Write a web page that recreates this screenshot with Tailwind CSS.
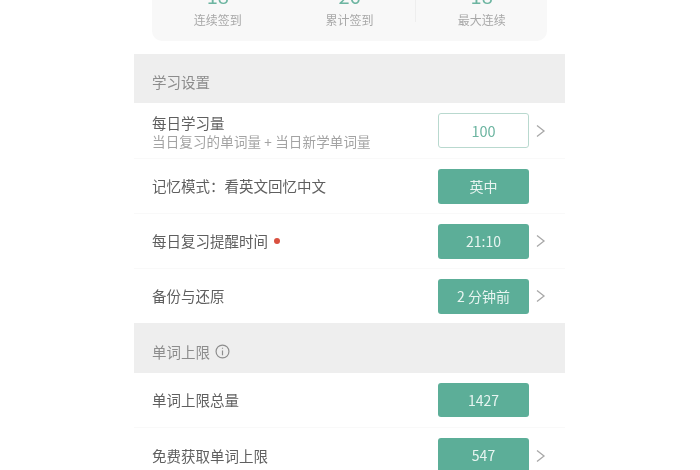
<!DOCTYPE html>
<html lang="zh-CN">

<head>
    <meta charset="UTF-8">
    <meta name="viewport" content="width=device-width, initial-scale=1.0">
    <title>学习设置</title>
    <script src="https://cdn.jsdelivr.net/npm/@tailwindcss/browser@4"></script>
</head>

<body class="bg-white h-[470px] overflow-hidden font-['Noto_Sans_CJK_SC','Noto_Sans',sans-serif]">
    <div class="w-[431px] ml-[134px] blur-[0.5px]">

        <!-- stats card, cut off by the top of the window -->
        <div class="mx-[18px] h-[91px] -mt-[50px] mb-[13px] bg-[#f8f8f8] rounded-[10px] grid grid-cols-3 pt-[32px]">
            <div class="flex flex-col items-center">
                <span class="text-[20px] leading-[28px] text-[#6db5a1]">18</span>
                <span class="text-[12px] leading-[18px] mt-[1px] text-[#a8a8a8]">连续签到</span>
            </div>
            <div class="flex flex-col items-center">
                <span class="text-[20px] leading-[28px] text-[#6db5a1]">26</span>
                <span class="text-[12px] leading-[18px] mt-[1px] text-[#a8a8a8]">累计签到</span>
            </div>
            <div class="flex flex-col items-center border-l border-[#eeeeee] h-[40px]">
                <span class="text-[20px] leading-[28px] text-[#6db5a1]">18</span>
                <span class="text-[12px] leading-[18px] mt-[1px] text-[#a8a8a8]">最大连续</span>
            </div>
        </div>

        <div class="h-[49px] bg-[#eeeeee] flex items-center px-[18px] pt-[7px] text-[14.5px] text-[#8c8c8c]">学习设置</div>

        <div class="h-[56px] flex items-center pl-[18px] pr-[18px] border-b border-[#f9f9f9]">
            <div class="flex-1 pt-[2px]">
                <div class="text-[14.5px] leading-[19px] text-[#5f5f5f]">每日学习量</div>
                <div class="text-[13.5px] leading-[18px] tracking-[0.15px] text-[#a3a3a3]">当日复习的单词量 + 当日新学单词量</div>
            </div>
            <div class="w-[91px] h-[35px] border border-[#b9d9cf] rounded-[3px] flex items-center justify-center text-[14.5px] text-[#6db5a1]">100</div>
            <svg class="w-[18px] h-[18px]" viewBox="0 0 18 18" fill="none" stroke="#a8a8a8" stroke-width="1.3"><path d="M8 3.5l7 5.5-7 5.5" /></svg>
        </div>

        <div class="h-[55px] flex items-center pl-[18px] pr-[18px] border-b border-[#f9f9f9]">
            <div class="flex-1 text-[14.5px] text-[#5f5f5f]">记忆模式：看英文回忆中文</div>
            <div class="w-[91px] h-[35px] bg-[#5cae98] rounded-[3px] flex items-center justify-center text-[14px] text-[#e8f5f1]">英中</div>
            <div class="w-[18px]"></div>
        </div>

        <div class="h-[55px] flex items-center pl-[18px] pr-[18px] border-b border-[#f9f9f9]">
            <div class="flex-1 flex items-center text-[14.5px] text-[#5f5f5f]">每日复习提醒时间<span class="w-[6px] h-[6px] ml-[6px] rounded-full bg-[#d9503f]"></span></div>
            <div class="w-[91px] h-[35px] bg-[#5cae98] rounded-[3px] flex items-center justify-center text-[14px] text-[#e8f5f1]">21:10</div>
            <svg class="w-[18px] h-[18px]" viewBox="0 0 18 18" fill="none" stroke="#a8a8a8" stroke-width="1.3"><path d="M8 3.5l7 5.5-7 5.5" /></svg>
        </div>

        <div class="h-[54px] flex items-center pl-[18px] pr-[18px]">
            <div class="flex-1 text-[14.5px] text-[#5f5f5f]">备份与还原</div>
            <div class="w-[91px] h-[35px] bg-[#5cae98] rounded-[3px] flex items-center justify-center text-[14px] text-[#e8f5f1]">2 分钟前</div>
            <svg class="w-[18px] h-[18px]" viewBox="0 0 18 18" fill="none" stroke="#a8a8a8" stroke-width="1.3"><path d="M8 3.5l7 5.5-7 5.5" /></svg>
        </div>

        <div class="h-[50px] bg-[#eeeeee] flex items-center gap-[5px] px-[18px] pt-[7px] text-[14.5px] text-[#8c8c8c]">
            单词上限
            <svg class="w-[15px] h-[15px]" viewBox="0 0 14 14" fill="none" stroke="#8c8c8c" stroke-width="1.1"><circle cx="7" cy="7" r="6" /><path d="M7 3.5v1M7 6v4.5" /></svg>
        </div>

        <div class="h-[55px] flex items-center pl-[18px] pr-[18px] border-b border-[#f9f9f9]">
            <div class="flex-1 text-[14.5px] text-[#5f5f5f]">单词上限总量</div>
            <div class="w-[91px] h-[34px] bg-[#5cae98] rounded-[3px] flex items-center justify-center text-[14px] text-[#e8f5f1]">1427</div>
            <div class="w-[18px]"></div>
        </div>

        <div class="h-[55px] flex items-center pl-[18px] pr-[18px]">
            <div class="flex-1 text-[14.5px] text-[#5f5f5f]">免费获取单词上限</div>
            <div class="w-[91px] h-[35px] bg-[#5cae98] rounded-[3px] flex items-center justify-center text-[14px] text-[#e8f5f1]">547</div>
            <svg class="w-[18px] h-[18px]" viewBox="0 0 18 18" fill="none" stroke="#a8a8a8" stroke-width="1.3"><path d="M8 3.5l7 5.5-7 5.5" /></svg>
        </div>
    </div>
</body>

</html>
